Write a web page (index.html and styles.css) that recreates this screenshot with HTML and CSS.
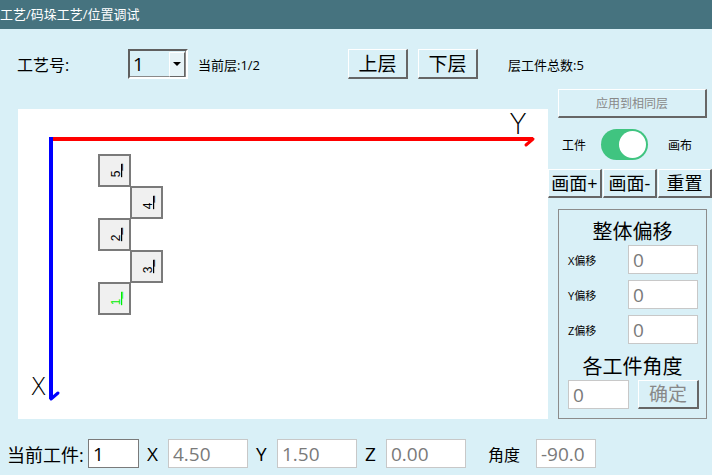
FILE: index.html
```html
<!DOCTYPE html>
<html lang="zh-CN">
<head>
  <meta charset="UTF-8">
  <meta name="viewport" content="width=device-width, initial-scale=1.0">
  <title>位置调试</title>
  <link rel="stylesheet" href="styles.css">
</head>
<body>

  <div class="titlebar">工艺/码垛工艺/位置调试</div>

  <div class="toprow">
    <span class="craft-label">工艺号:</span>
    <div class="combo">
      <span class="combo-value">1</span>
      <span class="combo-btn"><span class="tri"></span></span>
    </div>
    <span class="small-label layer">当前层:1/2</span>
    <button class="btn3d big">上层</button>
    <button class="btn3d big">下层</button>
    <span class="small-label total">层工件总数:5</span>
  </div>

  <div class="content">
    <div class="canvas">
      <svg class="plot" width="530" height="310" viewBox="0 0 530 310">
        <!-- axes -->
        <line x1="31" y1="30" x2="515" y2="30" stroke="#ff0000" stroke-width="4"/>
        <line x1="515" y1="30" x2="508" y2="36" stroke="#ff0000" stroke-width="3" stroke-linecap="round"/>
        <line x1="33" y1="28" x2="33" y2="290" stroke="#0000ff" stroke-width="4"/>
        <line x1="33" y1="290" x2="40" y2="284" stroke="#0000ff" stroke-width="3" stroke-linecap="round"/>
        <text class="axis-label" x="500" y="25" font-size="28">Y</text>
        <text class="axis-label" x="20.5" y="286" font-size="24">X</text>

        <!-- workpieces -->
        <g class="piece">
          <rect x="81" y="46" width="31" height="31"/>
          <text transform="translate(102 61.5) rotate(-90)">5_</text>
        </g>
        <g class="piece">
          <rect x="113" y="78" width="31" height="31"/>
          <text transform="translate(134 93.5) rotate(-90)">4_</text>
        </g>
        <g class="piece">
          <rect x="81" y="110" width="31" height="31"/>
          <text transform="translate(102 125.5) rotate(-90)">2_</text>
        </g>
        <g class="piece">
          <rect x="113" y="142" width="31" height="31"/>
          <text transform="translate(134 157.5) rotate(-90)">3_</text>
        </g>
        <g class="piece current">
          <rect x="81" y="174" width="31" height="31"/>
          <text transform="translate(102 189.5) rotate(-90)">1_</text>
        </g>
      </svg>
    </div>

    <div class="side">
      <button class="btn3d apply">应用到相同层</button>

      <div class="toggle-row">
        <span>工件</span>
        <div class="switch"><div class="knob"></div></div>
        <span class="canvas-label">画布</span>
      </div>

      <div class="btn-row">
        <button class="btn3d view">画面+</button>
        <button class="btn3d view">画面-</button>
        <button class="btn3d view">重置</button>
      </div>

      <div class="group">
        <div class="group-title">整体偏移</div>
        <div class="offset-row">
          <span class="offset-label">X偏移</span>
          <input class="field offset" value="0">
        </div>
        <div class="offset-row">
          <span class="offset-label">Y偏移</span>
          <input class="field offset" value="0">
        </div>
        <div class="offset-row">
          <span class="offset-label">Z偏移</span>
          <input class="field offset" value="0">
        </div>
        <div class="group-title sub">各工件角度</div>
        <div class="angle-row">
          <input class="field angle" value="0">
          <button class="btn3d ok">确定</button>
        </div>
      </div>
    </div>
  </div>

  <div class="bottom">
    <span class="cur-label">当前工件:</span>
    <input class="field cur" value="1">
    <span class="axis">X</span>
    <input class="field coord" value="4.50">
    <span class="axis">Y</span>
    <input class="field coord" value="1.50">
    <span class="axis">Z</span>
    <input class="field coord" value="0.00">
    <span class="angle-label">角度</span>
    <input class="field deg" value="-90.0">
  </div>

</body>
</html>
```

FILE: styles.css
```css
* {
  box-sizing: border-box;
}
body {
  margin: 0;
  width: 712px;
  height: 475px;
  overflow: hidden;
  background-color: #d9f0f7;
  font-family: "Open Sans", "Noto Sans CJK SC", sans-serif;
  color: #000;
}
.titlebar {
  height: 29px;
  line-height: 29px;
  background-color: #46737f;
  color: #fff;
  font-size: 13px;
  padding-left: 0;
}

/* top row */
.toprow {
  display: flex;
  align-items: center;
  height: 30px;
  margin-top: 20px;
  padding-left: 17px;
}
.craft-label {
  width: 111px;
  font-size: 16px;
}
.combo {
  display: flex;
  align-items: center;
  width: 60px;
  height: 30px;
  border: 2px solid;
  border-color: #5f5f5f #fff #fff #5f5f5f;
  box-shadow: inset -1px -1px 0 #8a8a8a;
}
.combo-value {
  flex: 1;
  padding-left: 3px;
  font-size: 19px;
  line-height: 26px;
}
.combo-btn {
  display: flex;
  align-items: center;
  justify-content: center;
  width: 16px;
  height: 25px;
  margin-right: 1px;
  background-color: #e6f3f7;
  border-left: 1px solid #fff;
  border-top: 1px solid #fff;
  border-right: 1px solid #666;
  border-bottom: 1px solid #666;
}
.tri {
  width: 0;
  height: 0;
  border-left: 4px solid transparent;
  border-right: 4px solid transparent;
  border-top: 4px solid #000;
}
.small-label {
  font-size: 13px;
}
.layer {
  width: 150px;
  margin-left: 10px;
}
.total {
  margin-left: 30px;
}

.btn3d {
  padding: 0;
  background-color: #d9f0f7;
  border-style: solid;
  border-width: 1px 2px 2px 1px;
  border-color: #fff #666 #666 #fff;
  font-family: "Open Sans", "Noto Sans CJK SC", sans-serif;
  color: #000;
  cursor: pointer;
}
.big {
  width: 60px;
  height: 30px;
  font-size: 19px;
  line-height: 26px;
}
.big + .big {
  margin-left: 10px;
}

/* canvas + side panel */
.content {
  display: flex;
}
.canvas {
  width: 530px;
  height: 310px;
  margin-top: 30px;
  margin-left: 18px;
  background-color: #fff;
}
.plot {
  display: block;
}
.axis-label {
  font-family: "DejaVu Sans", sans-serif;
  font-weight: 200;
  text-anchor: middle;
  fill: #000;
}
.piece rect {
  fill: #f0f0f0;
  stroke: #7a7a7a;
  stroke-width: 2;
}
.piece text {
  font-family: "Liberation Sans", sans-serif;
  font-size: 12px;
  text-anchor: middle;
  text-decoration: underline;
  fill: #000;
}
.piece.current text {
  fill: #00ee00;
}

.side {
  width: 164px;
  margin-top: 10px;
}
.apply {
  display: block;
  width: 149px;
  height: 29px;
  margin-left: 10px;
  font-size: 12px;
  color: #888;
}
.toggle-row {
  display: flex;
  align-items: center;
  height: 31px;
  margin-top: 11px;
  padding-left: 14px;
  font-size: 12px;
}
.switch {
  display: flex;
  justify-content: flex-end;
  align-items: center;
  width: 47px;
  height: 31px;
  margin-left: 15px;
  padding-right: 2px;
  border-radius: 16px;
  background-color: #40c480;
}
.knob {
  width: 27px;
  height: 27px;
  border-radius: 50%;
  background-color: #fff;
}
.canvas-label {
  margin-left: 20px;
}
.btn-row {
  display: flex;
  gap: 1px;
  margin-top: 9px;
}
.view {
  width: 54px;
  height: 29px;
  font-size: 18px;
  line-height: 25px;
}

.group {
  width: 149px;
  height: 210px;
  margin-top: 11px;
  margin-left: 10px;
  padding: 9px 0 0 9px;
  border: 1px solid #8c8c8c;
}
.group-title {
  height: 26px;
  line-height: 26px;
  margin-left: -9px;
  text-align: center;
  font-size: 20px;
}
.group-title.sub {
  margin-top: 10px;
}
.offset-row {
  display: flex;
  align-items: center;
  height: 29px;
}
.offset-row + .offset-row {
  margin-top: 6px;
}
.offset-label {
  width: 60px;
  font-size: 11px;
}
.field {
  height: 29px;
  padding: 0 0 0 4px;
  background-color: #fff;
  border: 1px solid #c8c8c8;
  font-family: "Open Sans", "Noto Sans CJK SC", sans-serif;
  font-size: 19px;
  color: #7a7a7a;
  outline: none;
}
.offset {
  width: 70px;
}
.angle-row {
  display: flex;
  margin-top: 0;
}
.angle {
  width: 61px;
}
.ok {
  width: 61px;
  height: 29px;
  margin-left: 9px;
  font-size: 19px;
  line-height: 25px;
  color: #888;
}

/* bottom row */
.bottom {
  display: flex;
  align-items: center;
  height: 29px;
  margin-top: 20px;
  padding-left: 7px;
}
.cur-label {
  width: 81px;
  font-size: 18px;
}
.cur {
  width: 51px;
  border-color: #7a7a7a;
  color: #000;
}
.axis {
  width: 12px;
  margin: 0 9px 0 8px;
  font-size: 19px;
}
.coord {
  width: 80px;
}
.angle-label {
  width: 32px;
  margin: 0 16px 0 22px;
  font-size: 16px;
}
.deg {
  width: 60px;
}
```
